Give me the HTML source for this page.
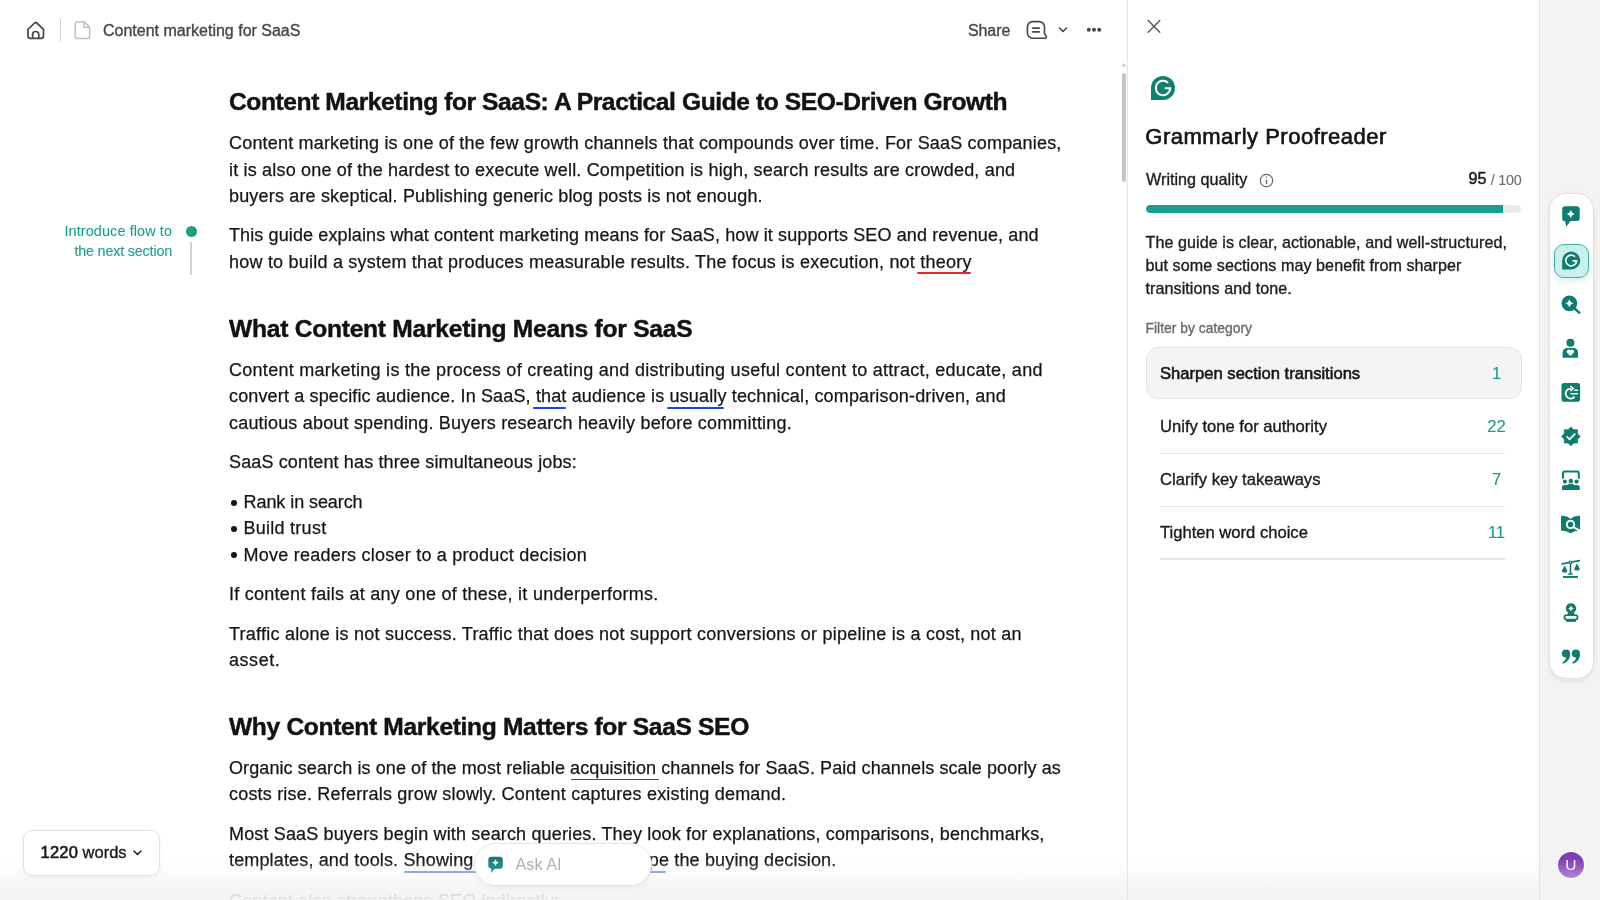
<!DOCTYPE html>
<html><head><meta charset="utf-8"><title>Content marketing for SaaS</title>
<style>
*{margin:0;padding:0;box-sizing:border-box}
html,body{width:1600px;height:900px;overflow:hidden;background:#fff;font-family:"Liberation Sans",sans-serif;color:#1c1c1c;position:relative}
#doc{position:absolute;left:0;top:0;width:1127px;height:900px;overflow:hidden;will-change:transform}
.b,.h{position:absolute;white-space:nowrap;color:#161616;-webkit-text-stroke:0.25px #161616}
.h{font-weight:bold;color:#121212;-webkit-text-stroke:0.45px #121212}
.ul{position:relative}
.ul::after{content:none}
.bul{display:inline-block;width:5.8px;height:5.8px;border-radius:50%;background:#161616;margin:0 6.8px 0 2px;vertical-align:2.3px}
.abs{position:absolute}
.t{position:absolute;white-space:nowrap}
#ui{position:absolute;left:0;top:0;width:1600px;height:900px;will-change:transform}
.t{-webkit-text-stroke:0.35px currentColor}

</style></head><body>
<div id="doc">
<div id="h1" class="h" style="left:229px;top:87.48px;font-size:24.6px;line-height:30px;letter-spacing:-0.4185px">Content Marketing for SaaS: A Practical Guide to SEO-Driven Growth</div>
<div id="l1" class="b" style="left:229px;top:130.26px;font-size:18.0px;line-height:26px;letter-spacing:0.1865px">Content marketing is one of the few growth channels that compounds over time. For SaaS companies,</div>
<div id="l2" class="b" style="left:229px;top:156.56px;font-size:18.0px;line-height:26px;letter-spacing:0.1806px">it is also one of the hardest to execute well. Competition is high, search results are crowded, and</div>
<div id="l3" class="b" style="left:229px;top:182.86px;font-size:18.0px;line-height:26px;letter-spacing:0.1731px">buyers are skeptical. Publishing generic blog posts is not enough.</div>
<div id="l4" class="b" style="left:229px;top:222.36px;font-size:18.0px;line-height:26px;letter-spacing:0.1181px">This guide explains what content marketing means for SaaS, how it supports SEO and revenue, and</div>
<div id="l5" class="b" style="left:229px;top:248.86px;font-size:18.0px;line-height:26px;letter-spacing:0.2174px">how to build a system that produces measurable results. The focus is execution, not <span class="ul" style="--uc:#e5262b">theory</span></div>
<div id="h2a" class="h" style="left:229px;top:314.08px;font-size:24.6px;line-height:30px;letter-spacing:-0.2556px">What Content Marketing Means for SaaS</div>
<div id="l6" class="b" style="left:229px;top:356.56px;font-size:18.0px;line-height:26px;letter-spacing:0.2800px">Content marketing is the process of creating and distributing useful content to attract, educate, and</div>
<div id="l7" class="b" style="left:229px;top:383.26px;font-size:18.0px;line-height:26px;letter-spacing:0.1500px">convert a specific audience. In SaaS, <span class="ul" style="--uc:#1846ef">that</span> audience is <span class="ul" style="--uc:#1846ef">usually</span> technical, comparison-driven, and</div>
<div id="l8" class="b" style="left:229px;top:409.56px;font-size:18.0px;line-height:26px;letter-spacing:0.1879px">cautious about spending. Buyers research heavily before committing.</div>
<div id="l9" class="b" style="left:229px;top:449.06px;font-size:18.0px;line-height:26px;letter-spacing:0.1375px">SaaS content has three simultaneous jobs:</div>
<div id="b1" class="b" style="left:229px;top:489.06px;font-size:18.0px;line-height:26px;letter-spacing:-0.0808px"><span class="bul"></span>Rank in search</div>
<div id="b2" class="b" style="left:229px;top:515.26px;font-size:18.0px;line-height:26px;letter-spacing:0.2500px"><span class="bul"></span>Build trust</div>
<div id="b3" class="b" style="left:229px;top:541.56px;font-size:18.0px;line-height:26px;letter-spacing:0.2250px"><span class="bul"></span>Move readers closer to a product decision</div>
<div id="l10" class="b" style="left:229px;top:580.76px;font-size:18.0px;line-height:26px;letter-spacing:0.2611px">If content fails at any one of these, it underperforms.</div>
<div id="l11" class="b" style="left:229px;top:620.76px;font-size:18.0px;line-height:26px;letter-spacing:0.2350px">Traffic alone is not success. Traffic that does not support conversions or pipeline is a cost, not an</div>
<div id="l12" class="b" style="left:229px;top:647.36px;font-size:18.0px;line-height:26px;letter-spacing:0.5500px">asset.</div>
<div id="h2b" class="h" style="left:229px;top:711.98px;font-size:24.6px;line-height:30px;letter-spacing:-0.3415px">Why Content Marketing Matters for SaaS SEO</div>
<div id="l13" class="b" style="left:229px;top:754.86px;font-size:18.0px;line-height:26px;letter-spacing:0.0912px">Organic search is one of the most reliable <span class="ul" style="--uc:#1846ef">acquisition</span> channels for SaaS. Paid channels scale poorly as</div>
<div id="l14" class="b" style="left:229px;top:780.96px;font-size:18.0px;line-height:26px;letter-spacing:0.1948px">costs rise. Referrals grow slowly. Content captures existing demand.</div>
<div id="l15" class="b" style="left:229px;top:820.76px;font-size:18.0px;line-height:26px;letter-spacing:0.1500px">Most SaaS buyers begin with search queries. They look for explanations, comparisons, benchmarks,</div>
<div id="l16" class="b" style="left:229px;top:847.06px;font-size:18.0px;line-height:26px;letter-spacing:0.1500px">templates, and tools. <span class="ul" style="--uc:#6088ef">Showing</span></div>
<div id="l16b" class="b" style="right:290.60px;top:847.06px;font-size:18.0px;line-height:26px;letter-spacing:0.1500px"><span class="ul" style="--uc:#6088ef">hape</span> the buying decision.</div>
<div id="l17" class="b" style="left:229px;top:887.56px;font-size:18.0px;line-height:26px;letter-spacing:0.1500px">Content also strengthens SEO indirectly:</div>
<div class="abs" style="left:917.3px;top:272.3px;width:53.7px;height:1.9px;border-radius:1px;background:#e5262b"></div>
<div class="abs" style="left:532.7px;top:406.7px;width:33.0px;height:1.9px;border-radius:1px;background:#1846ef"></div>
<div class="abs" style="left:666.9px;top:406.7px;width:57.0px;height:1.9px;border-radius:1px;background:#1846ef"></div>
<div class="abs" style="left:571.1px;top:778.5px;width:87.9px;height:1.9px;border-radius:1px;background:#1846ef"></div>
<div class="abs" style="left:404.0px;top:871.4px;width:262.4px;height:1.9px;border-radius:1px;background:#6088ef"></div>

</div>
<div id="ui">
<!-- top bar -->
<svg class="abs" style="left:26px;top:20px" width="20" height="20" viewBox="0 0 20 20" fill="none" stroke="#454545" stroke-width="1.7" stroke-linejoin="round"><path d="M2 9.3 L8.6 3 Q9.7 2 10.8 3 L17.5 9.3 V16.1 a2.3 2.3 0 0 1 -2.3 2.3 H4.3 A2.3 2.3 0 0 1 2 16.1 Z"/><path d="M6.6 18.4 V14.4 a3.1 2.9 0 0 1 6.2 0 V18.4"/></svg>
<div class="abs" style="left:59.5px;top:19px;width:1.2px;height:22px;background:#cfcfcf"></div>
<svg class="abs" style="left:74px;top:20px" width="17" height="20" viewBox="0 0 17 20" fill="none" stroke="#bfbfbf" stroke-width="1.5" stroke-linejoin="round"><path d="M3.3 1.7 H10.3 L15.6 7.2 V16.5 a2.1 2.1 0 0 1 -2.1 2.1 H3.3 a2.1 2.1 0 0 1 -2.1 -2.1 V3.8 a2.1 2.1 0 0 1 2.1 -2.1 Z"/><path d="M9.9 1.9 V7.3 H15.4"/></svg>
<div class="t" style="left:103px;top:21px;font-size:16px;line-height:20px;color:#474747">Content marketing for SaaS</div>
<div class="t" style="left:968px;top:21px;font-size:16px;line-height:20px;color:#474747;letter-spacing:-0.1px">Share</div>
<svg class="abs" style="left:1020px;top:15px" width="32" height="30" viewBox="1020 15 32 30" fill="none" stroke="#474747" stroke-width="1.6" stroke-linejoin="round" stroke-linecap="round"><path d="M1032.6 21.6 H1039.3 A5.2 5.2 0 0 1 1044.5 26.8 V33.3 L1046.2 36.3 A1.2 1.2 0 0 1 1045.1 38.2 H1032.6 A5.2 5.2 0 0 1 1027.4 33 V26.8 A5.2 5.2 0 0 1 1032.6 21.6 Z"/><path d="M1032.6 28.1 H1039.3 M1032.6 31.9 H1039.3"/></svg>
<svg class="abs" style="left:1058px;top:26px" width="10" height="8" viewBox="0 0 10 8" fill="none" stroke="#474747" stroke-width="1.5" stroke-linecap="round" stroke-linejoin="round"><path d="M1.5 2 L5 5.5 L8.5 2"/></svg>
<svg class="abs" style="left:1085px;top:25px" width="18" height="10" viewBox="0 0 18 10" fill="#474747"><circle cx="3.8" cy="4.7" r="2"/><circle cx="9" cy="4.7" r="2"/><circle cx="14.2" cy="4.7" r="2"/></svg>

<!-- scrollbar -->
<svg class="abs" style="left:1121px;top:62px" width="6" height="5" viewBox="0 0 6 5"><path d="M0.5 4.5 L3 1 L5.5 4.5 Z" fill="#c8c8c8"/></svg>
<div class="abs" style="left:1121.5px;top:72.5px;width:4.5px;height:109px;border-radius:3px;background:#c4c4c4"></div>

<!-- separator -->
<div class="abs" style="left:1127px;top:0;width:1px;height:900px;background:#e6e6e6"></div>

<!-- right panel -->
<div class="abs" id="panel" style="left:1128px;top:0;width:411px;height:900px;background:#fff"></div>
<svg class="abs" style="left:1146px;top:19px" width="16" height="15" viewBox="0 0 16 15" fill="none" stroke="#555" stroke-width="1.4" stroke-linecap="round"><path d="M2.2 1.6 L13.8 13.2 M13.8 1.6 L2.2 13.2"/></svg>

<svg class="abs" style="left:1150px;top:75px" width="26" height="26" viewBox="0 0 26 26"><path d="M13 1 A12 12 0 1 1 13 25 H1 V13 A12 12 0 0 1 13 1 Z" fill="#0e7f70"/><path d="M18.1 7.9 A7.2 7.2 0 1 0 20.2 13.3 H14.8" fill="none" stroke="#fff" stroke-width="2.05"/></svg>

<div class="t" style="left:1145.3px;top:124.4px;font-size:22px;line-height:26px;color:#141414;letter-spacing:0.5px;-webkit-text-stroke:0.65px #141414">Grammarly Proofreader</div>
<div class="t" style="left:1146px;top:169px;font-size:16.2px;line-height:20px;color:#1d1d1d">Writing quality</div>
<svg class="abs" style="left:1259px;top:173px" width="15" height="15" viewBox="0 0 15 15" fill="none" stroke="#6a6a6a" stroke-width="1.2"><circle cx="7.5" cy="7.5" r="6.2"/><path d="M7.5 6.5 V11" stroke-width="1.4"/><circle cx="7.5" cy="4.3" r="0.8" fill="#6a6a6a" stroke="none"/></svg>
<div class="t" style="left:1468.5px;top:169px;font-size:16px;line-height:20px;color:#1d1d1d;-webkit-text-stroke:0.55px #1d1d1d">95</div>
<div class="t" style="left:1490.8px;top:171px;font-size:14.3px;line-height:18px;color:#6b6b6b;letter-spacing:-0.25px;-webkit-text-stroke:0.1px #6b6b6b">/ 100</div>
<div class="abs" style="left:1145.5px;top:204.5px;width:375.5px;height:8.2px;border-radius:4px;background:#ebebeb;overflow:hidden"><div style="width:357px;height:100%;background:#16a08d;border-radius:4px 0 0 4px"></div></div>

<div class="t" style="left:1145.5px;top:231px;font-size:16.1px;line-height:23.2px;color:#1d1d1d;letter-spacing:0.07px">The guide is clear, actionable, and well-structured,<br>but some sections may benefit from sharper<br>transitions and tone.</div>
<div class="t" style="left:1145.5px;top:319px;font-size:13.9px;line-height:18px;color:#6b6b6b">Filter by category</div>

<div class="abs" style="left:1145.5px;top:347px;width:376px;height:52px;border-radius:12px;background:#f4f4f4;border:1px solid #e3e3e3"></div>
<div class="t" style="left:1160px;top:364px;font-size:16.6px;line-height:20px;color:#141414;-webkit-text-stroke:0.55px #141414">Sharpen section transitions</div>
<div class="t" style="left:1476px;width:41px;text-align:center;top:364px;font-size:16.6px;line-height:20px;color:#1a9a88;-webkit-text-stroke:0.1px #1a9a88">1</div>
<div class="t" style="left:1160px;top:417px;font-size:16.6px;line-height:20px;color:#1a1a1a">Unify tone for authority</div>
<div class="t" style="left:1476px;width:41px;text-align:center;top:417px;font-size:16.6px;line-height:20px;color:#1a9a88;-webkit-text-stroke:0.1px #1a9a88">22</div>
<div class="abs" style="left:1159.5px;top:452.5px;width:345px;height:1.5px;background:#e6e6e6"></div>
<div class="t" style="left:1160px;top:470px;font-size:16.6px;line-height:20px;color:#1a1a1a">Clarify key takeaways</div>
<div class="t" style="left:1476px;width:41px;text-align:center;top:470px;font-size:16.6px;line-height:20px;color:#1a9a88;-webkit-text-stroke:0.1px #1a9a88">7</div>
<div class="abs" style="left:1159.5px;top:505.5px;width:345px;height:1.5px;background:#e6e6e6"></div>
<div class="t" style="left:1160px;top:523px;font-size:16.6px;line-height:20px;color:#1a1a1a">Tighten word choice</div>
<div class="t" style="left:1476px;width:41px;text-align:center;top:523px;font-size:16.6px;line-height:20px;color:#1a9a88;-webkit-text-stroke:0.1px #1a9a88">11</div>
<div class="abs" style="left:1159.5px;top:558px;width:345px;height:1.5px;background:#e6e6e6"></div>

<!-- right strip -->
<div class="abs" style="left:1539px;top:0;width:61px;height:900px;background:#f3f3f3;border-left:1px solid #e2e2e2"></div>
<div class="abs" style="left:1548.5px;top:193.3px;width:45px;height:485.6px;border-radius:17px;background:#fff;border:1px solid #e2e2e2;box-shadow:0 2px 5px rgba(0,0,0,0.07)"></div>
<div class="abs" style="left:1553.5px;top:243.5px;width:35px;height:34.5px;border-radius:10px;background:#c9f0ea;border:1.5px solid #3db3a2;box-shadow:0 3px 6px rgba(30,150,130,0.18)"></div>
<svg class="abs" style="left:1540px;top:190px" width="60" height="500" viewBox="1540 190 60 500"><rect x="1562.2" y="206.3" width="17.5" height="14.8" rx="3.2" fill="#0f7c6d"/><path d="M1564.8 219 H1572 L1566.2 226.8 Z" fill="#0f7c6d"/><path d="M1570.8 209.7 Q1571.5739999999998 213.226 1575.1 214.0 Q1571.5739999999998 214.774 1570.8 218.3 Q1570.026 214.774 1566.5 214.0 Q1570.026 213.226 1570.8 209.7 Z" fill="#fff"/><path d="M1571.2 251.5 A9.0 9.0 0 1 1 1571.2 269.5 H1562.2 V260.5 A9.0 9.0 0 0 1 1571.2 251.5 Z" fill="#0f7c6d"/><path d="M1575.02 256.68 A5.3999999999999995 5.3999999999999995 0 1 0 1576.60 260.86 H1572.55" fill="none" stroke="#fff" stroke-width="1.58"/><circle cx="1569.4" cy="303.3" r="7.9" fill="#0f7c6d"/><path d="M1574.8 308.7 L1579.2 312.6" stroke="#0f7c6d" stroke-width="2.6" stroke-linecap="round"/><path d="M1569.4 298.90000000000003 Q1570.192 302.50800000000004 1573.8000000000002 303.3 Q1570.192 304.092 1569.4 307.7 Q1568.6080000000002 304.092 1565.0 303.3 Q1568.6080000000002 302.50800000000004 1569.4 298.90000000000003 Z" fill="#fff"/><circle cx="1570.4" cy="342.8" r="4" fill="#0f7c6d"/><path d="M1562.6 357.8 V353 Q1562.6 348 1567.6 348 H1573 Q1578.1 348 1578.1 353 V357.8 Z" fill="#0f7c6d"/><path d="M1570.4 356 L1567.2 352.9 A1.75 1.75 0 0 1 1570.4 350.5 A1.75 1.75 0 0 1 1573.6 352.9 Z" fill="#fff"/><rect x="1561.5" y="383" width="18.6" height="18.8" rx="2.2" fill="#0f7c6d"/><path d="M1571.2 388.6 A5 5 0 1 0 1574.6 396.6" fill="none" stroke="#fff" stroke-width="1.8"/><path d="M1570.4 386 L1573.2 388.6 L1570.4 391.2" fill="none" stroke="#fff" stroke-width="1.6" stroke-linejoin="miter"/><path d="M1574.3 390.3 H1577.9 M1570.6 393.8 H1577.9" stroke="#fff" stroke-width="1.5"/><polygon points="1570.90,427.10 1573.66,429.75 1577.48,429.82 1577.55,433.64 1580.20,436.40 1577.55,439.16 1577.48,442.98 1573.66,443.05 1570.90,445.70 1568.14,443.05 1564.32,442.98 1564.25,439.16 1561.60,436.40 1564.25,433.64 1564.32,429.82 1568.14,429.75" fill="#0f7c6d" stroke="#0f7c6d" stroke-width="0.8" stroke-linejoin="round"/><path d="M1566.6 436.4 L1569.6 439.3 L1575.2 433.6" fill="none" stroke="#fff" stroke-width="1.8"/><path d="M1563 478 V473.2 Q1563 471.6 1564.6 471.6 H1577.2 Q1578.8 471.6 1578.8 473.2 V478" fill="none" stroke="#0f7c6d" stroke-width="2" stroke-linecap="round"/><circle cx="1564.9" cy="481.6" r="2.1" fill="#0f7c6d"/><circle cx="1570.8" cy="480.9" r="2.2" fill="#0f7c6d"/><circle cx="1576.6" cy="481.6" r="2.1" fill="#0f7c6d"/><path d="M1562 489.9 V487.5 Q1562 485 1564.6 485 H1567.4 Q1568.8 483.5 1570.8 483.5 Q1572.8 483.5 1574.2 485 H1577.2 Q1579.8 485 1579.8 487.5 V489.9 Z" fill="#0f7c6d"/><path d="M1561 515.8 Q1566.5 515.2 1570.6 518.8 Q1574.6 515.2 1580 515.8 V530.6 Q1574.8 530.6 1570.6 533.2 Q1566.4 530.6 1561 530.6 Z" fill="#0f7c6d"/><circle cx="1570.5" cy="524.4" r="3.7" fill="none" stroke="#fff" stroke-width="1.9"/><path d="M1573.4 527.2 L1579.6 530.6" stroke="#fff" stroke-width="1.9" stroke-linecap="round"/><path d="M1562 563.9 L1579.4 560.6" stroke="#0f7c6d" stroke-width="1.7" stroke-linecap="round"/><circle cx="1570.5" cy="562.3" r="1.9" fill="#0f7c6d"/><circle cx="1570.5" cy="562.3" r="0.7" fill="#fff"/><path d="M1570.5 563.5 V574" stroke="#0f7c6d" stroke-width="1.6"/><path d="M1567.6 574.8 Q1568.2 573 1570.5 573 Q1572.8 573 1573.4 574.8 Z" fill="#0f7c6d"/><rect x="1563" y="576" width="15" height="1.9" fill="#0f7c6d"/><path d="M1564.6 565.4 L1561.9 570.6 Q1561.9 572.8 1564.6 572.8 Q1567.3 572.8 1567.3 570.6 Z" fill="#0f7c6d"/><path d="M1577 563.2 L1574.3 568.4 Q1574.3 570.6 1577 570.6 Q1579.7 570.6 1579.7 568.4 Z" fill="#0f7c6d"/><path d="M1571 603.2 A5.1 5.1 0 0 1 1574.2 612.3 V614.9 H1567.8 V612.3 A5.1 5.1 0 0 1 1571 603.2 Z" fill="#0f7c6d"/><path d="M1571 605.5 Q1571.522 607.8779999999999 1573.9 608.4 Q1571.522 608.922 1571 611.3 Q1570.478 608.922 1568.1 608.4 Q1570.478 607.8779999999999 1571 605.5 Z" fill="#fff"/><rect x="1564.5" y="615.2" width="13" height="4.4" rx="2" fill="none" stroke="#0f7c6d" stroke-width="1.8"/><rect x="1566.2" y="619.5" width="9.6" height="2.4" fill="#0f7c6d"/><circle cx="1566.0" cy="653.5" r="4.1" fill="#0f7c6d"/><path d="M1570.1 653.5 C1570.3 659.0 1567.5 662.0 1562.8 663.8 L1562.2 662.5 C1565.0 660.7 1566.4 659.0 1566.2 656.7 Z" fill="#0f7c6d"/><circle cx="1575.9" cy="653.5" r="4.1" fill="#0f7c6d"/><path d="M1580.0 653.5 C1580.2 659.0 1577.4 662.0 1572.7 663.8 L1572.1000000000001 662.5 C1574.9 660.7 1576.3000000000002 659.0 1576.1000000000001 656.7 Z" fill="#0f7c6d"/></svg>

<!-- avatar -->
<div class="abs" style="left:1557.8px;top:851.8px;width:26.2px;height:26.2px;border-radius:50%;box-shadow:0 0 0 1.2px #fff;background:linear-gradient(#7f3fb6 30%,#b285d6);color:#fff;font-size:15.5px;line-height:26.5px;-webkit-text-stroke:0;text-align:center">U</div>

<!-- margin comment -->
<div class="t" style="left:30px;width:142px;text-align:right;top:222px;font-size:14.4px;line-height:19.8px;color:#1aa08b;-webkit-text-stroke:0.1px #1aa08b"><span style="letter-spacing:0.12px;margin-right:-0.12px">Introduce flow to</span><br><span style="letter-spacing:-0.2px">the next section</span></div>
<div class="abs" style="left:186px;top:226px;width:11px;height:11px;border-radius:50%;background:#1a9e8a"></div>
<div class="abs" style="left:190.3px;top:241.7px;width:1.8px;height:33px;background:#d2d2d2"></div>

<!-- bottom fade -->
<div class="abs" style="left:0;top:860px;width:1127px;height:40px;background:linear-gradient(rgba(243,243,243,0),rgba(244,244,244,0.3) 30%,rgba(244,244,244,0.78) 62%,rgba(243,243,243,0.94))"></div>
<div class="abs" style="left:1128px;top:860px;width:411px;height:40px;background:linear-gradient(rgba(243,243,243,0),rgba(244,244,244,0.3) 30%,rgba(244,244,244,0.78) 62%,rgba(243,243,243,0.94))"></div>
<!-- words pill -->
<div class="abs" style="left:22.5px;top:829.5px;width:137px;height:46px;border-radius:9px;background:#fff;border:1px solid #e0e0e0;box-shadow:0 2px 5px rgba(0,0,0,0.05)"></div>
<div class="t" style="left:40.5px;top:842px;font-size:16.5px;line-height:20px;color:#1a1a1a"><span style="-webkit-text-stroke:0.6px #1a1a1a;letter-spacing:0.2px">1220</span> words</div>
<svg class="abs" style="left:132px;top:848px" width="11" height="9" viewBox="0 0 11 9" fill="none" stroke="#222" stroke-width="1.5" stroke-linecap="round" stroke-linejoin="round"><path d="M2 3 L5.5 6.5 L9 3"/></svg>

<!-- ask ai pill -->
<div class="abs" style="left:473.5px;top:843px;width:178px;height:43px;border-radius:22px;background:#fff;border:1px solid #e3e3e3;box-shadow:0 2px 6px rgba(0,0,0,0.05)"></div>
<svg class="abs" style="left:480px;top:850px" width="30" height="30" viewBox="480 850 30 30"><defs><linearGradient id="ag" x1="0" y1="0" x2="0" y2="1"><stop offset="0" stop-color="#0f7d6c"/><stop offset="1" stop-color="#2a9a86"/></linearGradient></defs><path d="M491.3 856.8 H499.8 A3 3 0 0 1 502.8 859.8 V865.7 A3 3 0 0 1 499.8 868.7 H494.6 L491.2 873 V868.5 A3 3 0 0 1 488.3 865.7 V859.8 A3 3 0 0 1 491.3 856.8 Z" fill="url(#ag)"/><path d="M495.5 859.1 Q496.1 862.2 499.2 862.8 Q496.1 863.4 495.5 866.5 Q494.9 863.4 491.8 862.8 Q494.9 862.2 495.5 859.1 Z" fill="#fff"/></svg>
<div class="t" style="left:515.5px;top:854px;font-size:16.3px;line-height:20px;color:#b0b0b0;-webkit-text-stroke:0">Ask AI</div>

</div>
</body></html>
